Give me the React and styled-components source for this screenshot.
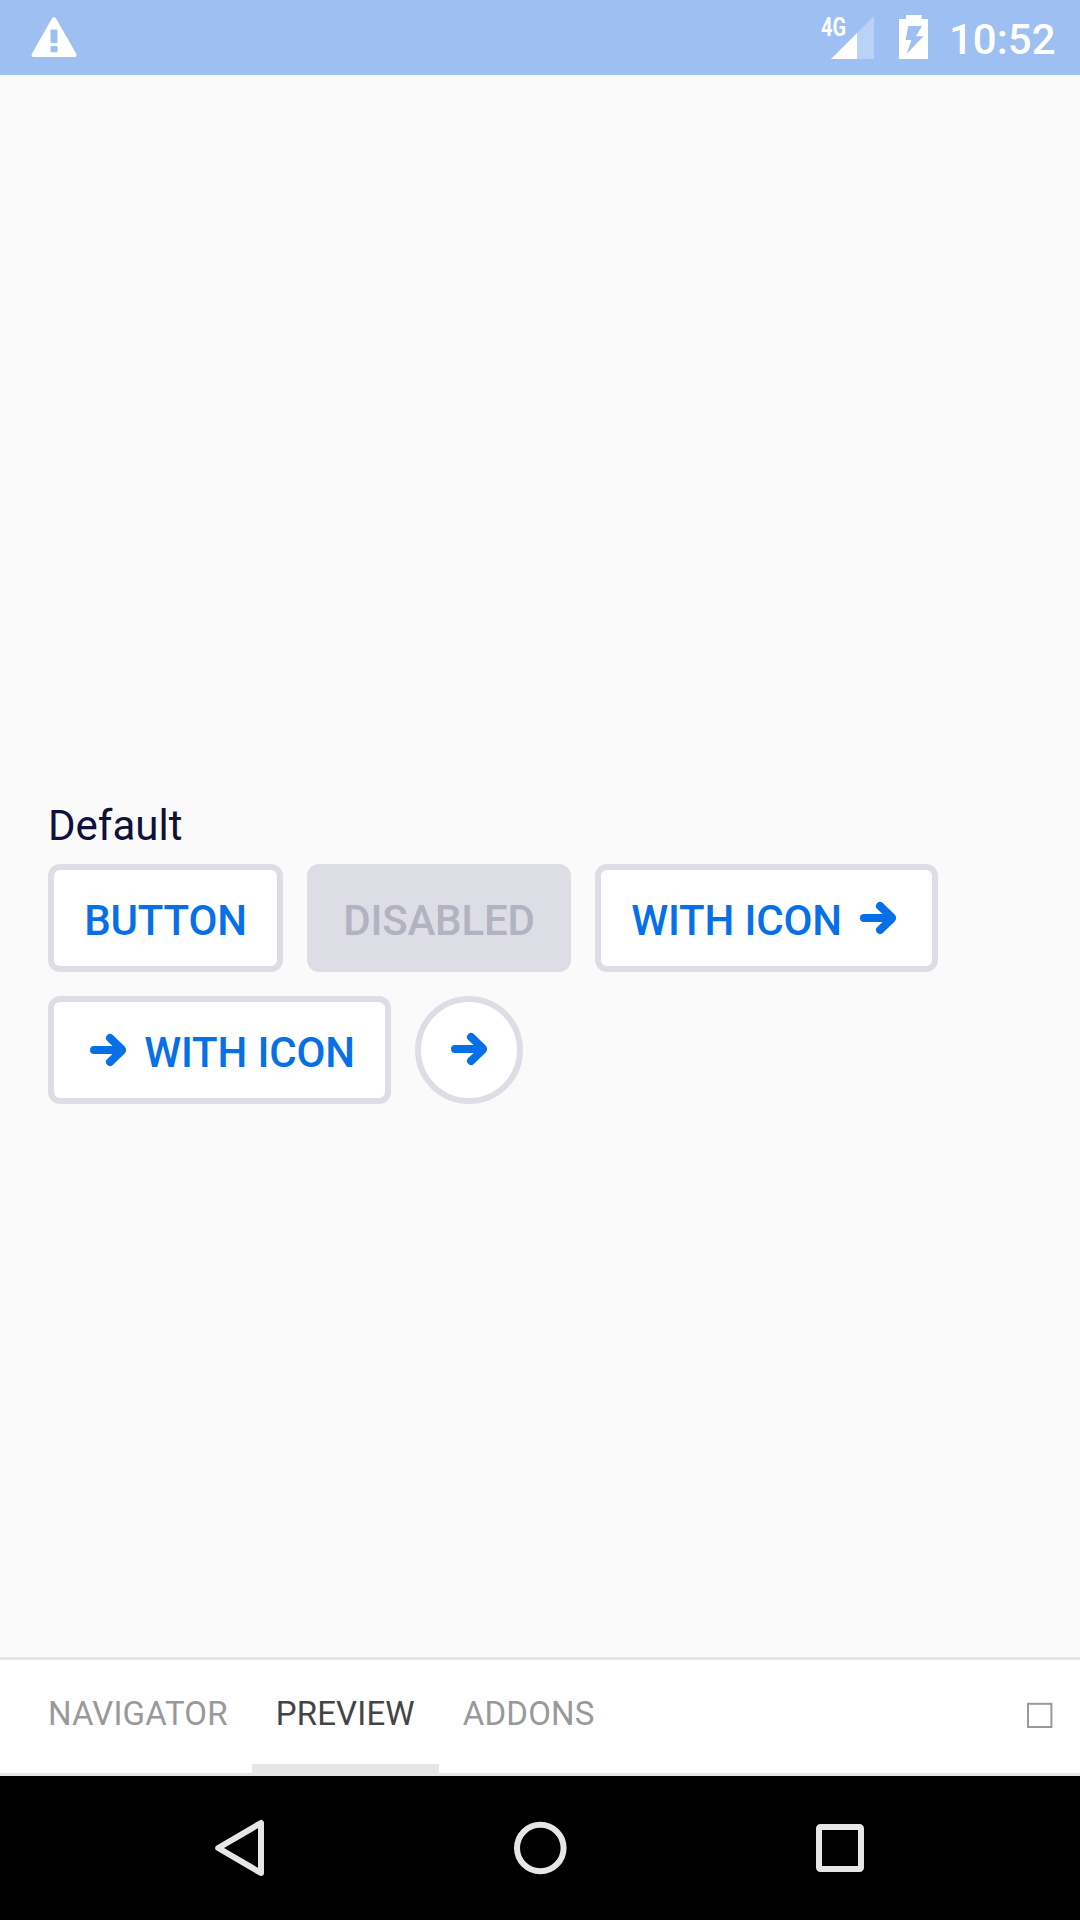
import React from "react";
import styled, { createGlobalStyle } from "styled-components";

const GlobalStyle = createGlobalStyle`
  * { box-sizing: border-box; }
  body { margin: 0; background: #fafafa; }
`;

const Screen = styled.div`
  width: 1080px;
  height: 1920px;
  display: flex;
  flex-direction: column;
  background: #fafafa;
  font-family: Roboto, "Noto Sans", sans-serif;
  overflow: hidden;
`;

const StatusBar = styled.header`
  height: 75px;
  flex: none;
  display: flex;
  justify-content: space-between;
  padding: 0 24px 0 30px;
  background: #9dbff2;
  color: #fff;
`;

const StatusGroup = styled.div`
  display: flex;
  align-items: flex-start;
`;

const Glyph = styled.svg`
  display: block;
  flex: none;
  margin-left: ${(p) => p.$gap || 0}px;
`;

const Network = styled.span`
  width: 10px;
  padding-top: 12.5px;
  font-size: 25px;
  line-height: 30px;
  font-weight: 700;
  white-space: nowrap;
  transform: scaleX(0.8);
  transform-origin: 0 0;
`;

const Clock = styled.time`
  width: 107px;
  margin-left: 20px;
  padding-top: 15px;
  font-size: 42px;
  line-height: 49px;
  font-weight: 500;
  white-space: nowrap;
`;

const Preview = styled.main`
  flex: 1;
  display: flex;
  flex-direction: column;
  justify-content: center;
  padding: 173px 48px 0;
`;

const SectionTitle = styled.h2`
  margin: 0;
  height: 63px;
  font-size: 42px;
  line-height: 49px;
  font-weight: 400;
  color: #10103a;
`;

const ButtonGrid = styled.div`
  display: flex;
  flex-wrap: wrap;
  gap: 24px;
`;

const Button = styled.button`
  width: ${(p) => p.$width}px;
  height: 108px;
  display: flex;
  align-items: center;
  justify-content: center;
  gap: 12px;
  margin: 0;
  padding: ${(p) => (p.$round ? "0 0 2px" : "0")};
  border: 6px solid #dddde6;
  border-radius: ${(p) => (p.$round ? "50%" : "12px")};
  background: ${(p) => (p.disabled ? "#dddde6" : "#fff")};
  color: ${(p) => (p.disabled ? "#b2b2c0" : "#0770e6")};
  font-family: inherit;
  font-size: 42px;
  font-weight: 500;
  line-height: 50px;
  letter-spacing: -0.17px;
  white-space: nowrap;
`;

const Label = styled.span`
  padding-top: 5px;
`;

const TabBar = styled.nav`
  height: 119px;
  flex: none;
  display: flex;
  align-items: stretch;
  padding: 0 24px;
  border-top: 3px solid #e6e6e6;
  border-bottom: 3px solid #e6e6e6;
  background: #fff;
`;

const Tab = styled.a`
  padding: 33px 24px 0;
  border-bottom: 9px solid ${(p) => (p.$active ? "#e6e6e6" : "transparent")};
  color: ${(p) => (p.$active ? "#444" : "#999")};
  font-size: 33px;
  line-height: 41px;
  letter-spacing: 0.17px;
  white-space: nowrap;
`;

const PanelToggle = styled.button`
  margin: 39px 0 0 auto;
  padding: 0;
  width: 32px;
  height: 32px;
  border: 0;
  background: none;
`;

const SystemNav = styled.footer`
  height: 144px;
  flex: none;
  display: flex;
  align-items: center;
  justify-content: center;
  gap: 220px;
  background: #000;
`;

const ArrowIcon = () => (
  <Glyph
    width="48"
    height="48"
    viewBox="0 0 48 48"
    fill="none"
    stroke="currentColor"
    strokeWidth="8"
    strokeLinecap="round"
    strokeLinejoin="round"
  >
    <path d="M10 24H36M26 12L37.4 22.9Q38.5 24 37.4 25.1L26 36" />
    <path d="M30 20L36 24L30 28Z" fill="currentColor" strokeWidth="1" />
  </Glyph>
);

const WarningIcon = () => (
  <Glyph width="48" height="75" viewBox="29.7 0 48 75">
    <path
      fill="#fff"
      fillRule="evenodd"
      d="M51.8 18.3Q53.7 15.6 55.6 18.3L76 53.8Q77 57 74 57H33.5Q30.5 57 31.6 53.8ZM50.2 29.5V43H57.2V29.5ZM50.2 46V52.3H57.2V46Z"
    />
  </Glyph>
);

const SignalIcon = () => (
  <Glyph width="43" height="75" viewBox="831 0 43 75" fill="#fff">
    <path opacity="0.3" d="M857 33L874 16V59H857Z" />
    <path d="M831 59L857 33V59Z" />
  </Glyph>
);

const BatteryIcon = () => (
  <Glyph $gap={24} width="31" height="75" viewBox="898 0 31 75">
    <path
      fill="#fff"
      fillRule="evenodd"
      d="M906 15H921.6V19H928V59H899V19H906ZM908.3 26L905.5 40H911.5L906.5 54L923.5 36.3H916L922 26Z"
    />
  </Glyph>
);

const tabs = ["NAVIGATOR", "PREVIEW", "ADDONS"];

export default function App() {
  return (
    <Screen>
      <GlobalStyle />
      <StatusBar>
        <StatusGroup>
          <WarningIcon />
        </StatusGroup>
        <StatusGroup>
          <Network>4G</Network>
          <SignalIcon />
          <BatteryIcon />
          <Clock>10:52</Clock>
        </StatusGroup>
      </StatusBar>

      <Preview>
        <SectionTitle>Default</SectionTitle>
        <ButtonGrid>
          <Button $width={235}>
            <Label>BUTTON</Label>
          </Button>
          <Button $width={264} disabled>
            <Label>DISABLED</Label>
          </Button>
          <Button $width={343}>
            <Label>WITH ICON</Label>
            <ArrowIcon />
          </Button>
          <Button $width={343}>
            <ArrowIcon />
            <Label>WITH ICON</Label>
          </Button>
          <Button $width={108} $round aria-label="Next">
            <ArrowIcon />
          </Button>
        </ButtonGrid>
      </Preview>

      <TabBar>
        {tabs.map((name) => (
          <Tab key={name} $active={name === "PREVIEW"}>
            {name}
          </Tab>
        ))}
        <PanelToggle aria-label="Toggle panels">
          <Glyph width="32" height="32" viewBox="1024 1699 32 32">
            <rect
              x="1028"
              y="1703.8"
              width="23.4"
              height="23.2"
              fill="none"
              stroke="#999"
              strokeWidth="2"
            />
          </Glyph>
        </PanelToggle>
      </TabBar>

      <SystemNav>
        <Glyph width="80" height="80" viewBox="200 1808 80 80" fill="none" stroke="#e6e6e6">
          <path d="M218.2 1848L261 1823V1873Z" strokeWidth="6" strokeLinejoin="round" />
        </Glyph>
        <Glyph width="80" height="80" viewBox="500 1808 80 80" fill="none" stroke="#e6e6e6">
          <circle cx="540.3" cy="1848" r="23.3" strokeWidth="6" />
        </Glyph>
        <Glyph width="80" height="80" viewBox="800 1808 80 80" fill="none" stroke="#e6e6e6">
          <rect x="819" y="1827" width="42" height="42" rx="1.5" strokeWidth="6" />
        </Glyph>
      </SystemNav>
    </Screen>
  );
}
